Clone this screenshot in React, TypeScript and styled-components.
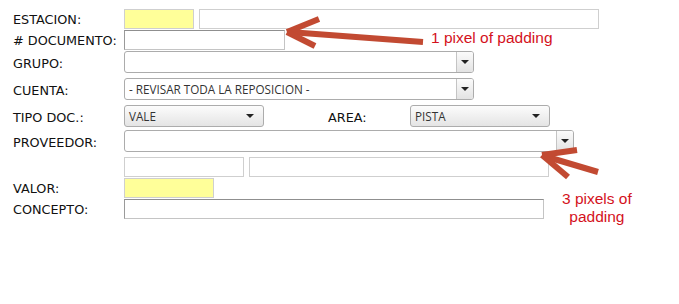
import React from "react";
import styled, { createGlobalStyle, css } from "styled-components";

const Global = createGlobalStyle`
  html, body { margin: 0; padding: 0; background: #fff; }
  body { font-family: "DejaVu Sans", Verdana, sans-serif; }
`;

const Page = styled.div`
  position: relative;
  width: 679px;
  height: 304px;
  overflow: hidden;
  background: #fff;
`;

const Form = styled.div`
  display: flex;
  flex-direction: column;
  padding: 0 0 0 13px;
`;

const Row = styled.div<{ $mt: number; $h: number }>`
  display: flex;
  align-items: center;
  height: ${(p) => p.$h}px;
  margin-top: ${(p) => p.$mt}px;
`;

const Label = styled.span<{ $w?: number; $ml?: number; $dy?: number }>`
  flex: none;
  width: ${(p) => p.$w ?? 111}px;
  margin-left: ${(p) => p.$ml ?? 0}px;
  padding-top: ${(p) => p.$dy ?? 0}px;
  font-family: "DejaVu Sans", Verdana, sans-serif;
  font-size: 12.8px;
  color: #111;
  white-space: nowrap;
`;

const TextBox = styled.div<{ $w: number; $yellow?: boolean; $tone: "light" | "dark"; $ml?: number }>`
  flex: none;
  box-sizing: border-box;
  width: ${(p) => p.$w}px;
  height: 100%;
  margin-left: ${(p) => p.$ml ?? 0}px;
  background: ${(p) => (p.$yellow ? "#ffff99" : "#fff")};
  ${(p) =>
    p.$tone === "light"
      ? css`border: 1px solid #cfcfcf;`
      : css`
          border: 1px solid #c4c4c4;
          border-top-color: #8f8f8f;
          border-left-color: #9a9a9a;
        `}
`;

const Combo = styled.div<{ $w: number }>`
  flex: none;
  box-sizing: border-box;
  width: ${(p) => p.$w}px;
  height: 100%;
  display: flex;
  border: 1px solid #acacac;
  border-radius: 3px;
  background: #fff;
  overflow: hidden;
`;

const ComboField = styled.div`
  flex: 1;
  display: flex;
  align-items: center;
  padding-left: 4px;
  font-family: "Open Sans", "Segoe UI", sans-serif;
  font-size: 11.7px;
  color: #333;
  white-space: nowrap;
`;

const ComboButton = styled.div`
  flex: none;
  width: 16px;
  display: flex;
  align-items: center;
  justify-content: center;
  border-left: 1px solid #c4c4c4;
  background: linear-gradient(#fbfbfb, #e3e3e3);
`;

const Select = styled.div<{ $w: number }>`
  flex: none;
  box-sizing: border-box;
  width: ${(p) => p.$w}px;
  height: 100%;
  display: flex;
  align-items: center;
  justify-content: space-between;
  padding: 0 9px 0 4px;
  border: 1px solid #acacac;
  border-radius: 3px;
  background: linear-gradient(#fcfcfc, #e4e4e4);
  font-family: "Open Sans", "Segoe UI", sans-serif;
  font-size: 11.7px;
  color: #333;
`;

const Caret = styled.span`
  width: 0;
  height: 0;
  border-left: 4px solid transparent;
  border-right: 4px solid transparent;
  border-top: 4px solid #222;
`;

const Overlay = styled.svg`
  position: absolute;
  left: 0;
  top: 0;
  pointer-events: none;
`;

const Note = styled.div<{ $x: number; $y: number }>`
  position: absolute;
  left: ${(p) => p.$x}px;
  top: ${(p) => p.$y}px;
  font-family: "Liberation Sans", Arial, sans-serif;
  font-size: 15.5px;
  line-height: 18px;
  color: #d4111c;
  text-align: center;
  white-space: nowrap;
`;

export default function App() {
  return (
    <Page>
      <Global />
      <Form>
        <Row $mt={9} $h={20}>
          <Label>ESTACION:</Label>
          <TextBox $w={70} $yellow $tone="light" />
          <TextBox $w={400} $tone="light" $ml={5} />
        </Row>
        <Row $mt={1} $h={20}>
          <Label># DOCUMENTO:</Label>
          <TextBox $w={161} $tone="dark" />
        </Row>
        <Row $mt={1} $h={22}>
          <Label $dy={3}>GRUPO:</Label>
          <Combo $w={350}>
            <ComboField />
            <ComboButton>
              <Caret />
            </ComboButton>
          </Combo>
        </Row>
        <Row $mt={5} $h={22}>
          <Label $dy={3}>CUENTA:</Label>
          <Combo $w={350}>
            <ComboField>- REVISAR TODA LA REPOSICION -</ComboField>
            <ComboButton>
              <Caret />
            </ComboButton>
          </Combo>
        </Row>
        <Row $mt={5} $h={22}>
          <Label $dy={3}>TIPO DOC.:</Label>
          <Select $w={140}>
            VALE
            <Caret />
          </Select>
          <Label $w={82} $ml={64} $dy={3}>AREA:</Label>
          <Select $w={140}>
            PISTA
            <Caret />
          </Select>
        </Row>
        <Row $mt={3} $h={22}>
          <Label $dy={3}>PROVEEDOR:</Label>
          <Combo $w={450}>
            <ComboField />
            <ComboButton>
              <Caret />
            </ComboButton>
          </Combo>
        </Row>
        <Row $mt={5} $h={20}>
          <Label />
          <TextBox $w={120} $tone="light" />
          <TextBox $w={300} $tone="light" $ml={5} />
        </Row>
        <Row $mt={1} $h={20}>
          <Label>VALOR:</Label>
          <TextBox $w={90} $yellow $tone="light" />
        </Row>
        <Row $mt={1} $h={20}>
          <Label $dy={1}>CONCEPTO:</Label>
          <TextBox $w={420} $tone="dark" />
        </Row>
      </Form>

      <Overlay width={679} height={304} viewBox="0 0 679 304">
        <g stroke="#c24a32" strokeWidth={6} strokeLinecap="butt" fill="none">
          <line x1={423} y1={42} x2={289} y2={32} />
          <line x1={319} y1={19} x2={287} y2={32} />
          <line x1={315} y1={46} x2={287} y2={32} />
          <line x1={598} y1={172} x2={544} y2={156} />
          <line x1={577} y1={150} x2={542} y2={155} />
          <line x1={568} y1={177} x2={542} y2={155} />
        </g>
      </Overlay>
      <Note $x={431} $y={29}>1 pixel of padding</Note>
      <Note $x={562} $y={190}>
        3 pixels of
        <br />
        padding
      </Note>
    </Page>
  );
}
